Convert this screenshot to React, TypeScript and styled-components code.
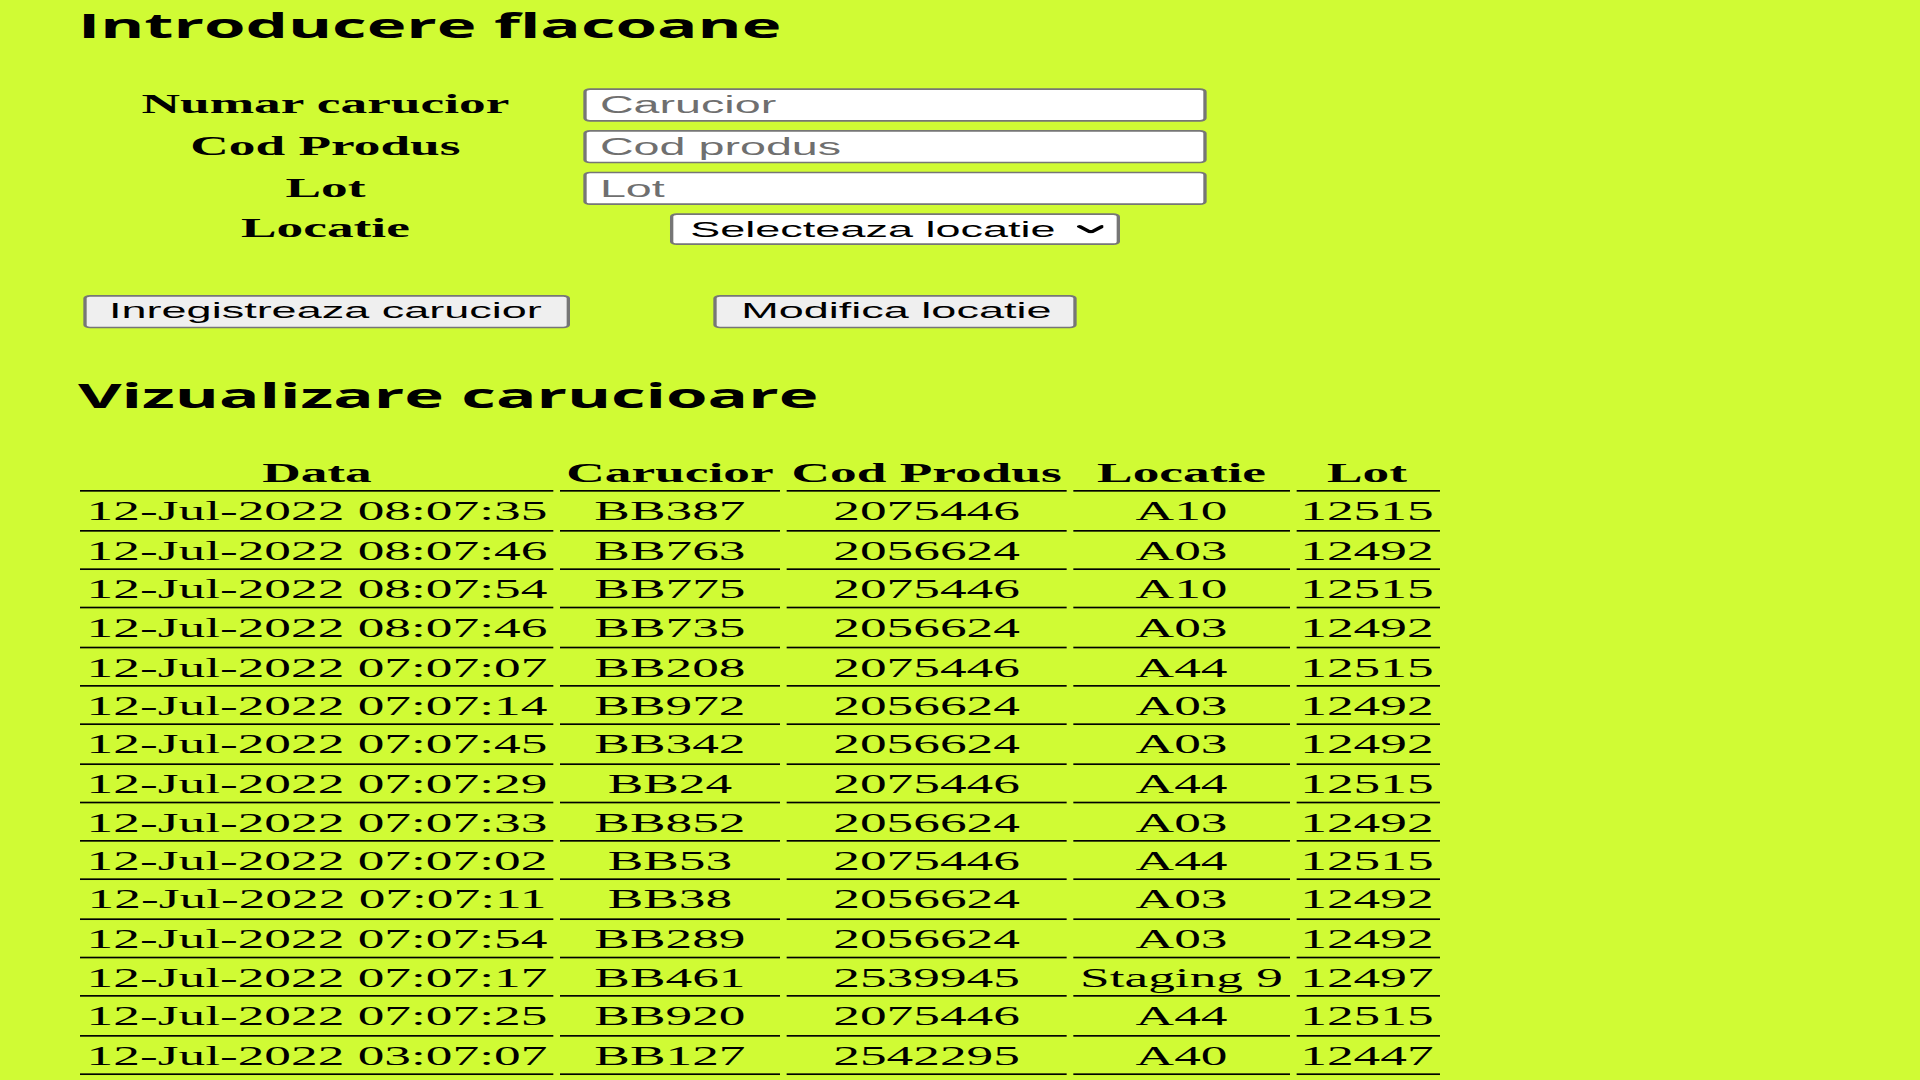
import React from "react";
import styled, { createGlobalStyle } from "styled-components";

const LIME = "#d0fb34";

const GlobalStyle = createGlobalStyle`
  html, body {
    margin: 0;
    padding: 0;
    overflow: hidden;
    background: ${LIME};
  }
  body {
    font-family: "Liberation Serif", "Times New Roman", serif;
    color: #000;
  }
`;

const Viewport = styled.div`
  width: 1920px;
  height: 1080px;
  overflow: hidden;
  background: ${LIME};
`;

/* The reference is a small page stretched to fill the screen: lay it out at
   its natural size and stretch it the same way. */
const Page = styled.div`
  width: 576px;
  height: 648px;
  box-sizing: border-box;
  padding-left: 23.4px;
  transform: scale(3.3333, 1.6667);
  transform-origin: 0 0;
  display: flex;
  flex-direction: column;
  align-items: flex-start;
`;

const Heading = styled.h1<{ $top: number }>`
  margin: ${(p) => p.$top}px 0 0 0;
  font-family: "Open Sans", "Noto Sans", sans-serif;
  font-weight: 700;
  font-size: 20.15px;
  line-height: 27.2px;
  color: #000;
  white-space: nowrap;
`;

const Form = styled.div`
  display: grid;
  grid-template-columns: 146.1px 186.9px;
  column-gap: 4.8px;
  row-gap: 5px;
  align-items: center;
  margin: 24.2px 0 0 1.2px;
`;

const Label = styled.span`
  font-family: "Liberation Serif", "Times New Roman", serif;
  font-weight: 700;
  font-size: 16px;
  text-align: center;
  white-space: nowrap;
`;

const TextInput = styled.input`
  width: 186.9px;
  height: 20px;
  margin: 0;
  box-sizing: border-box;
  border: 1px solid #767676;
  border-radius: 2px;
  padding: 1px 3.5px;
  background: #fff;
  font-family: "Liberation Sans", Arial, sans-serif;
  font-size: 14px;
  color: #000;
  outline: none;
  &::placeholder {
    color: #6f6f6f;
  }
`;

const SelectBox = styled.label`
  justify-self: center;
  width: 135px;
  height: 19px;
  box-sizing: border-box;
  border: 1px solid #767676;
  border-radius: 2px;
  background: #fff;
  padding: 0 4px 0 4.7px;
  display: flex;
  align-items: center;
  justify-content: space-between;
`;

const NativeSelect = styled.select`
  appearance: none;
  -webkit-appearance: none;
  border: 0;
  margin: 0;
  padding: 0;
  background: transparent;
  outline: none;
  font-family: "Liberation Sans", Arial, sans-serif;
  font-size: 13.5px;
  color: #000;
`;

const Chevron = styled.svg`
  width: 8.5px;
  height: 5.5px;
  flex: none;
`;

const ActionRow = styled.div`
  grid-column: 1 / -1;
  display: grid;
  grid-template-columns: subgrid;
  align-items: center;
  margin-top: 24.6px;
`;

const Button = styled.button`
  justify-self: center;
  height: 20px;
  box-sizing: border-box;
  margin: 0;
  padding: 1px 7px;
  border: 1px solid #767676;
  border-radius: 2px;
  background: #efefef;
  font-family: "Liberation Sans", Arial, sans-serif;
  font-size: 13.5px;
  color: #000;
  white-space: nowrap;
`;

const Table = styled.table`
  margin: 21px 0 0 -1.6px;
  border-collapse: separate;
  border-spacing: 2px;
  table-layout: fixed;
  width: 411.8px;
  font-family: "Liberation Serif", "Times New Roman", serif;
  font-size: 16px;
`;

const HeadCell = styled.th`
  padding: 1px 0;
  line-height: 18.3px;
  font-weight: 700;
  text-align: center;
  white-space: nowrap;
  border-bottom: 1px solid #000;
`;

const Cell = styled.td`
  padding: 1px 0;
  line-height: 18.3px;
  font-weight: 400;
  text-align: center;
  white-space: nowrap;
  border-bottom: 1px solid #000;
`;

const columns = [
  { key: "data", title: "Data", width: 142.6 },
  { key: "carucior", title: "Carucior", width: 65.2 },
  { key: "cod", title: "Cod Produs", width: 84.8 },
  { key: "locatie", title: "Locatie", width: 64.2 },
  { key: "lot", title: "Lot", width: 43 },
];

const rows: [string, string, string, string, string][] = [
  ["12-Jul-2022 08:07:35", "BB387", "2075446", "A10", "12515"],
  ["12-Jul-2022 08:07:46", "BB763", "2056624", "A03", "12492"],
  ["12-Jul-2022 08:07:54", "BB775", "2075446", "A10", "12515"],
  ["12-Jul-2022 08:07:46", "BB735", "2056624", "A03", "12492"],
  ["12-Jul-2022 07:07:07", "BB208", "2075446", "A44", "12515"],
  ["12-Jul-2022 07:07:14", "BB972", "2056624", "A03", "12492"],
  ["12-Jul-2022 07:07:45", "BB342", "2056624", "A03", "12492"],
  ["12-Jul-2022 07:07:29", "BB24", "2075446", "A44", "12515"],
  ["12-Jul-2022 07:07:33", "BB852", "2056624", "A03", "12492"],
  ["12-Jul-2022 07:07:02", "BB53", "2075446", "A44", "12515"],
  ["12-Jul-2022 07:07:11", "BB38", "2056624", "A03", "12492"],
  ["12-Jul-2022 07:07:54", "BB289", "2056624", "A03", "12492"],
  ["12-Jul-2022 07:07:17", "BB461", "2539945", "Staging 9", "12497"],
  ["12-Jul-2022 07:07:25", "BB920", "2075446", "A44", "12515"],
  ["12-Jul-2022 03:07:07", "BB127", "2542295", "A40", "12447"],
];

const fields = [
  { label: "Numar carucior", placeholder: "Carucior" },
  { label: "Cod Produs", placeholder: "Cod produs" },
  { label: "Lot", placeholder: "Lot" },
];

export default function App() {
  return (
    <Viewport>
      <GlobalStyle />
      <Page>
        <Heading $top={1.6}>Introducere flacoane</Heading>

        <Form>
          {fields.map((f) => (
            <React.Fragment key={f.label}>
              <Label>{f.label}</Label>
              <TextInput type="text" placeholder={f.placeholder} />
            </React.Fragment>
          ))}
          <Label>Locatie</Label>
          <SelectBox>
            <NativeSelect defaultValue="">
              <option value="">Selecteaza locatie</option>
            </NativeSelect>
            <Chevron viewBox="0 0 8.5 5.5" aria-hidden="true">
              <polyline
                points="0.9,0.9 4.25,4.4 7.6,0.9"
                fill="none"
                stroke="#000"
                strokeWidth="1.6"
                strokeLinecap="round"
                strokeLinejoin="round"
              />
            </Chevron>
          </SelectBox>
          <ActionRow>
            <Button type="button">Inregistreaza carucior</Button>
            <Button type="button">Modifica locatie</Button>
          </ActionRow>
        </Form>

        <Heading as="h2" $top={27.4}>
          Vizualizare carucioare
        </Heading>

        <Table>
          <colgroup>
            {columns.map((c) => (
              <col key={c.key} style={{ width: `${c.width}px` }} />
            ))}
          </colgroup>
          <thead>
            <tr>
              {columns.map((c) => (
                <HeadCell key={c.key}>{c.title}</HeadCell>
              ))}
            </tr>
          </thead>
          <tbody>
            {rows.map((r, i) => (
              <tr key={i}>
                {r.map((v, j) => (
                  <Cell key={j}>{v}</Cell>
                ))}
              </tr>
            ))}
          </tbody>
        </Table>
      </Page>
    </Viewport>
  );
}
